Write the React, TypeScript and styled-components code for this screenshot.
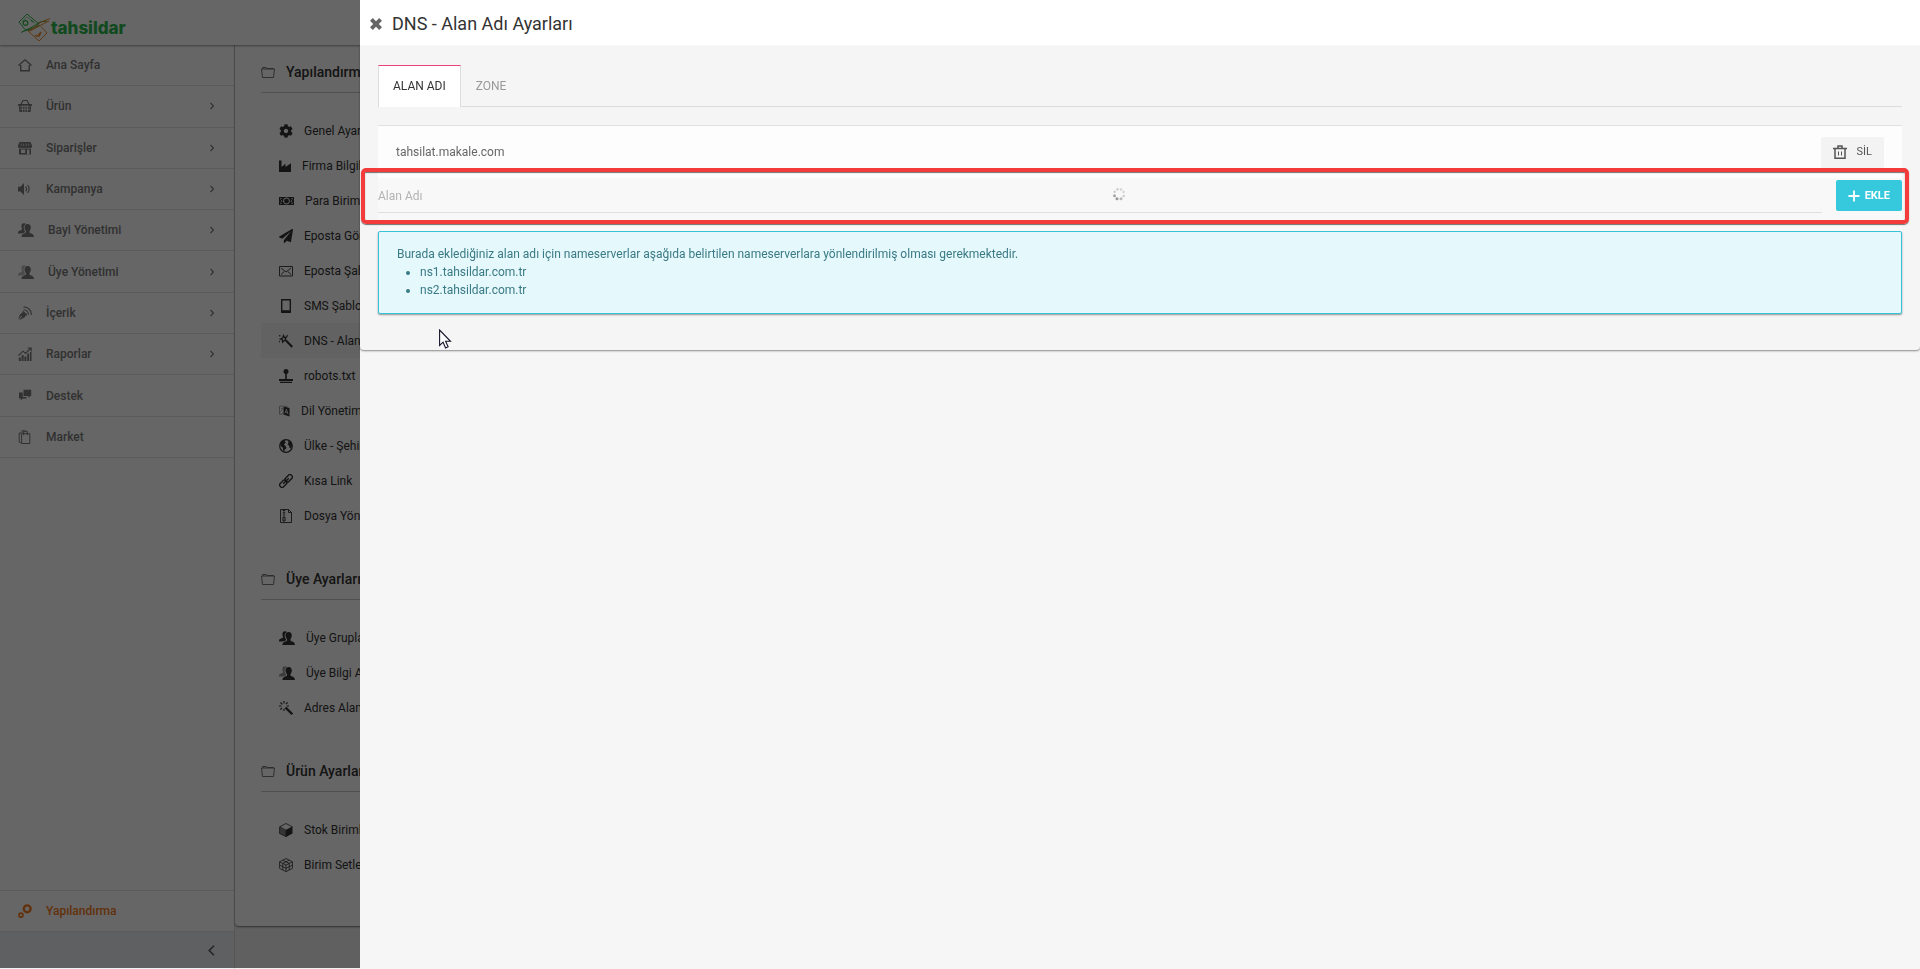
import React from "react";
import styled, { createGlobalStyle } from "styled-components";
import { FaCog, FaPaperPlane } from "react-icons/fa";

const GlobalStyle = createGlobalStyle`
  * { box-sizing: border-box; }
  body {
    margin: 0;
    background: #f0f0f0;
    color: #333;
    font-family: Roboto, "Liberation Sans", sans-serif;
    font-size: 12px;
    line-height: 18px;
  }
  ul { margin: 0; padding: 0; list-style: none; }
  a { color: inherit; text-decoration: none; }
  button, input { font: inherit; }
`;

/* ---------- shell ---------- */

const Shell = styled.div`
  display: flex;
  flex-direction: column;
  height: 100vh;
  min-height: 960px;
  overflow: hidden;
`;

const TopBar = styled.header`
  position: relative;
  z-index: 1;
  flex: none;
  display: flex;
  align-items: center;
  height: 45px;
  padding: 10px 18px 0;
  background: #fff;
  box-shadow: 0 1px 2px rgba(0, 0, 0, 0.4);
`;

const Brand = styled.a`
  display: flex;
  align-items: center;
  gap: 1px;
  color: #2fb84f;
  font-family: Inter, sans-serif;
  font-size: 17px;
  font-weight: 800;
`;

const Body = styled.div`
  flex: 1;
  display: flex;
  min-height: 0;
`;

/* ---------- sidebar ---------- */

const Sidebar = styled.nav`
  flex: none;
  display: flex;
  flex-direction: column;
  width: 235px;
  background: #fff;
  border-right: 1px solid #d8d8d8;
`;

const NavList = styled.ul`
  display: grid;
  grid-auto-rows: 1fr;
  height: 413px;
`;

const NavItem = styled.li`
  display: flex;
  border-bottom: 1px solid #e4e4e4;
`;

const NavLink = styled.a<{ $active?: boolean }>`
  flex: 1;
  display: flex;
  align-items: center;
  gap: 14px;
  padding: 0 20px 0 18px;
  color: ${(p) => (p.$active ? "#f47b20" : "#7a7a7a")};
  font-weight: 500;

  > svg:last-child:not(:first-child) { margin-left: auto; }
`;

const SidebarFoot = styled.div`
  margin-top: auto;
`;

const FootItem = styled.div`
  display: flex;
  height: 42px;
  border-top: 1px solid #e4e4e4;
  border-bottom: 1px solid #e4e4e4;
`;

const Collapse = styled.button`
  display: flex;
  align-items: center;
  justify-content: flex-end;
  width: 100%;
  height: 37px;
  padding: 0 19px;
  border: 0;
  background: #eef1f4;
  color: #555;
`;

/* ---------- settings card ---------- */

const Main = styled.main`
  flex: 1;
  min-width: 0;
`;

const Card = styled.div`
  padding: 7px 26px 44px;
  background: #fff;
  border-radius: 0 0 4px 4px;
  box-shadow: 0 1px 2px rgba(0, 0, 0, 0.5);
`;

const Group = styled.section`
  & + & { margin-top: 26px; }
`;

const GroupTitle = styled.h2`
  display: flex;
  align-items: center;
  gap: 11px;
  height: 41px;
  margin: 0 0 20px;
  border-bottom: 1px solid #c8c8c8;
  color: #333;
  font-size: 14px;
  font-weight: 500;

  svg { opacity: 0.75; }
`;

const SettingLink = styled.a<{ $active?: boolean }>`
  display: flex;
  align-items: center;
  gap: 11px;
  height: 35px;
  padding: 0 18px;
  background: ${(p) => (p.$active ? "#f5f5f5" : "transparent")};
  color: #333;
`;

/* ---------- drawer ---------- */

const Backdrop = styled.div`
  position: fixed;
  inset: 0 0 1px;
  z-index: 5;
  background: rgba(0, 0, 0, 0.6);
`;

const Drawer = styled.aside`
  position: fixed;
  inset: 0 0 0 360px;
  z-index: 6;
  background: #f6f6f6;
`;

const DrawerHead = styled.header`
  display: flex;
  align-items: center;
  gap: 10px;
  height: 46px;
  padding: 1px 10px 0;
  background: #fff;
`;

const CloseButton = styled.button`
  display: flex;
  padding: 0;
  border: 0;
  background: none;
  color: #666;
`;

const DrawerTitle = styled.h1`
  margin: 0;
  color: #333;
  font-size: 18px;
  font-weight: 400;
  line-height: 24px;
`;

const Panel = styled.div`
  position: relative;
  padding: 19px 18px 36px;
  background: #f5f5f5;
  border-radius: 0 0 4px 4px;
  box-shadow: 0 1px 2px rgba(0, 0, 0, 0.45);
`;

const Tabs = styled.div`
  display: flex;
  box-shadow: inset 0 -1px #ddd;
`;

const Tab = styled.button<{ $active?: boolean }>`
  height: 42px;
  padding: 0 14px 2px;
  border: 1px solid transparent;
  border-bottom: 0;
  border-color: ${(p) => (p.$active ? "#ec407a #ddd" : "transparent")};
  background: ${(p) => (p.$active ? "#fff" : "none")};
  color: ${(p) => (p.$active ? "#333" : "#999")};
`;

const DomainRow = styled.div`
  display: flex;
  align-items: center;
  justify-content: space-between;
  height: 53px;
  margin-top: 18px;
  padding: 0 18px;
  border-top: 1px solid #e0e0e0;
  background: #fdfdfd;
  color: #666;
`;

const Button = styled.button<{ $primary?: boolean }>`
  display: flex;
  align-items: center;
  gap: ${(p) => (p.$primary ? 5 : 10)}px;
  height: 31px;
  padding: 0 12px;
  border: 0;
  border-radius: 2px;
  background: ${(p) => (p.$primary ? "#36c9de" : "#f3f3f3")};
  color: ${(p) => (p.$primary ? "#fff" : "#555")};
  font-size: 11px;
  font-weight: ${(p) => (p.$primary ? 700 : 400)};
`;

const AddForm = styled.form`
  position: relative;
  display: flex;
  gap: 14px;
  height: 53px;
  padding-top: 2px;
  background: #f8f8f8;
`;

const Field = styled.div`
  position: relative;
  flex: 1;
`;

const DomainInput = styled.input`
  display: block;
  width: 100%;
  height: 33px;
  padding: 0;
  border: 0;
  border-bottom: 1px solid #e0e0e0;
  outline: 0;
  background: none;
  color: #555;

  &::placeholder { color: #b3b3b3; opacity: 1; }
`;

const Loader = styled.span`
  position: absolute;
  top: 7px;
  left: calc(50% + 12px);
  display: flex;
`;

const Highlight = styled.div`
  position: absolute;
  inset: -10px -7px 7px -17px;
  border: 4px solid #f43b3b;
  border-radius: 5px;
  box-shadow: 0 1px 1px rgba(0, 0, 0, 0.55), inset 0 1px 1px rgba(0, 0, 0, 0.55);
  pointer-events: none;
`;

const Notice = styled.div`
  padding: 13px 18px 14px;
  border: 1px solid #36c3d6;
  border-radius: 2px;
  background: #e5f8fc;
  box-shadow: 0 1px 2px rgba(0, 0, 0, 0.4);
  color: #3a7a85;

  p { margin: 0; }
  ul { padding-left: 23px; list-style: disc; }
`;

const Pointer = styled.span`
  position: absolute;
  top: 283px;
  left: 79px;
  display: flex;
`;

/* ---------- icons ---------- */

type IconProps = { w?: number; h?: number; children: React.ReactNode };

const Solid = ({ w = 14, h = 14, children }: IconProps) => (
  <svg width={w} height={h} viewBox={`0 0 ${w} ${h}`} fill="currentColor" aria-hidden="true">
    {children}
  </svg>
);

const Line = ({ w = 14, h = 14, children }: IconProps) => (
  <svg width={w} height={h} viewBox={`0 0 ${w} ${h}`} fill="none" stroke="currentColor" aria-hidden="true">
    {children}
  </svg>
);

const ChevronRight = () => (
  <Line w={4} h={8}><path d="M.5.9 3.4 4 .5 7.1" strokeWidth="1.2" /></Line>
);

const Home = () => (
  <Line><path d="M.4 7.500 7 1.800l6.600 5.700M2.700 7v5.700h8.600V7" strokeWidth="1.400" /></Line>
);

const Basket = () => (
  <Solid>
    <path d="M0 5h14v1.500h-.7L12.500 13h-11L.7 6.500H0z" />
    <path d="M3 5.200 5 1.500h4l2 3.700" fill="none" stroke="currentColor" strokeWidth="1.200" />
    <path d="M1.500 7.700h11M2 10.200h10M4.600 6v7M7 6v7M9.400 6v7" stroke="#fff" strokeWidth=".8" />
  </Solid>
);

const Store = () => (
  <Solid>
    <path d="M1.500 1h11L14 4.500V6a1.300 1.300 0 0 1-1 .9V13.500H1V6.900A1.300 1.300 0 0 1 0 6V4.500z" />
    <path d="M3 8.500h4.200V12H3zM9 8.500h2.400v5H9z" fill="#fff" />
    <path d="M3.200 2.500v2.500M5.700 2.500v2.500M8.300 2.500v2.500M10.800 2.500v2.500M1 7.300h12" stroke="#fff" strokeWidth=".7" />
  </Solid>
);

const Speaker = () => (
  <Solid>
    <path d="M0 4.700h2.500L6 1v12L2.500 9.500H0z" />
    <path d="M7.700 4.700q1.800 2.300 0 4.600M9.500 3q3.400 4 0 8" fill="none" stroke="currentColor" strokeWidth="1.100" />
  </Solid>
);

const People = ({ faded }: { faded?: boolean }) => (
  <Solid w={16}>
    <path
      d="M3.400 3.200C3.400 1.200 4.400.2 5.700.2c1 0 1.800.3 2.200 1C6.400 1.700 5.700 3 5.700 4.600c0 1.500.5 2.700 1.300 3.800v.8C6.300 9.800 5 10 3.900 10.500H0c0-2.700 1.500-2.900 3.200-3.500.9-.3 1-.8.7-1.500-.4-.8-.5-1.500-.5-2.300z"
      opacity={faded ? 0.5 : 1}
    />
    <path d="M6.500 4.500C6.500 2.300 7.700 1 9.700 1s3.100 1.300 3.100 3.500c0 1.600-.7 2.700-1.300 3.600v1.400c.9 1.200 4.300.8 4.500 4.500H3.400c.2-3.700 3.700-3.300 4.600-4.500V8.100C7.300 7.200 6.500 6.100 6.500 4.500z" />
  </Solid>
);

const PenSignal = () => (
  <Solid>
    <path d="M.3 13.500C1.500 9.500 2 7.500 5.500 6l2.700 2.700C7 12 4.500 12.500 1 13.900l3.200-3.600-.7-.6z" />
    <path d="M5.500 3.800q4.600.2 5 5M5.500.9q7.500.4 8 8" fill="none" stroke="currentColor" strokeWidth="1.100" />
    <path d="M4.800 5.300 9 9.300" stroke="currentColor" strokeWidth="1.200" />
  </Solid>
);

const Chart = () => (
  <Solid>
    <path d="M.8 10.500h2V14h-2zM3.600 8h2v6h-2zM6.400 9.500h2V14h-2zM9.200 6.500h2V14h-2zM12 5h1.500v9H12z" />
    <path d="M.5 8.500 5 4.200l2.500 2.300 5-5M9.700 1h3.500v3.500" fill="none" stroke="currentColor" strokeWidth="1.100" />
  </Solid>
);

const Chats = () => (
  <Solid>
    <path d="M5.500.8h7.700V7h-1.700L12 8.800 9.500 7h-4z" />
    <path d="M1 3.500h3.700V8H8.500v1.500H4.800L2.900 11.500V9.500H1z" />
  </Solid>
);

const Bags = () => (
  <Line>
    <path d="M3.600 3.700h8.200v9.800H3.600zM3.300 3H1.200v9l2 1M5.700 5.200V1.300h3.600v3.900M4 3.300V.8h3" />
  </Line>
);

const Gears = () => (
  <Line><circle cx="9.200" cy="4.800" r="3.400" strokeWidth="2.400" /><circle cx="3" cy="11.200" r="2" strokeWidth="1.700" /></Line>
);

const Folder = () => (
  <Line><path d="M.5 4h13l-1 8.500h-11zM1.700 4V2.500h3.500l.8 1h6.300V4" strokeWidth=".9" /></Line>
);

const Factory = () => (
  <Solid w={12}><path d="M0 1.500h2.500V8L6.500 4.700V8L12 4.200V13H0z" /></Solid>
);

const Banknote = () => (
  <Solid w={15}>
    <path d="M0 3h15v8H0z" />
    <circle cx="7.500" cy="7" r="3" fill="none" stroke="#fff" />
    <path d="M1.500 5.500V4.500h1.200M12.300 4.500h1.200v1M1.500 8.500v1h1.200M12.300 9.500h1.200v-1M2.500 6v2M12.500 6v2" fill="none" stroke="#fff" strokeWidth=".7" />
  </Solid>
);

const Envelope = () => (
  <Line><path d="M.5 2.500h13v9.500H.5zM2 4l5 4 5-4M2 10.500l3.200-3M12 10.500l-3.200-3" strokeWidth=".9" /></Line>
);

const Tablet = () => (
  <Solid>
    <path d="M2 1a.9.9 0 0 1 1-1h8a.9.9 0 0 1 1 1v12a.9.9 0 0 1-1 1H3a.9.9 0 0 1-1-1zM3.400 1.600v9.600h7.200V1.600z" fillRule="evenodd" />
  </Solid>
);

const StarWand = () => (
  <Line>
    <path d="m7.500 7 5.800 6" strokeWidth="2.200" />
    <path d="m4.500 1.500.7 2 2.300-.6-1.300 2 1.200 2-2.200-.4-1.600 1.600-.2-2.300L1.300 5l2.200-.9zM0 1.500l1.500.5M0 8l1-.7M8.500 1.200 7.800 2" strokeWidth="1.200" />
  </Line>
);

const Joystick = () => (
  <Solid>
    <circle cx="7" cy="2.500" r="2.500" />
    <path d="M6.200 4h1.600v6H14v2H0v-2h6.200zM1 12.700h12V14H1z" />
  </Solid>
);

const Translate = () => (
  <Solid w={11} h={12}>
    <path d="M4.500 1.500 10.500 3v8.500L4.500 9.500z" />
    <path d="M4.500 1.200H.5v8l4-.5M2 3.500h2M1.500 6.500l2-2M5.500 1l3 .7" fill="none" stroke="currentColor" strokeWidth=".7" opacity=".6" />
    <path d="m6 8.200 1.500-4 1.500 5M6.500 7l2 .6" fill="none" stroke="#fff" strokeWidth=".8" />
  </Solid>
);

const Globe = () => (
  <Solid>
    <circle cx="7" cy="7" r="6.300" fill="none" stroke="currentColor" strokeWidth="1.200" />
    <path d="M1.500 4.500C2.500 2.500 4 1 6.500 1l-.7 1.700 1 .8-1.800 2L6.800 7.500 7.500 9l-2 2v2C4 12 4 10 3.700 8.500L1.500 7zM9 1.300l3 2 1.200 3.200L12 9.500l-1.500-.8-.3-2L8.500 5.500 9.500 3.500z" />
  </Solid>
);

const Chain = () => (
  <Line>
    <g transform="rotate(-45 7 7)" strokeWidth="1.400">
      <rect x="-.8" y="4.700" width="7.500" height="4.600" rx="1" />
      <rect x="7.300" y="4.700" width="7.500" height="4.600" rx="1" />
      <path d="M3 7h8" />
    </g>
  </Line>
);

const Archive = () => (
  <Line>
    <path d="M1.500.5h8l3 3v10h-11zM9.500.5v3h3" strokeWidth=".9" />
    <path d="M5 1v6" strokeWidth="2.400" strokeDasharray="1 .8" />
    <path d="M4 8h2v4H4z" />
  </Line>
);

const MagicWand = () => (
  <Line>
    <path d="m6.500 6.500 6.800 6.700" strokeWidth="2.400" />
    <path d="M5 0v2.500M0 5h2.500M1.500 1.500l1.800 1.800M8.700 1.300 7 3M1.300 8.700 3 7M7.700 5H10M5 7.700V10" strokeWidth="1.200" />
  </Line>
);

const BoxIcon = () => (
  <Solid>
    <path d="M7 7.300 13.500 3.800v6.700L7 14z" />
    <path d="M7 .5 13.300 3.800 7 7.200.7 3.800zM.6 3.900V10.500L7 13.700V7.200" fill="none" stroke="currentColor" strokeWidth=".8" />
    <path d="M.6 4.200 7 7.500v6L.6 10.500z" opacity=".6" />
  </Solid>
);

const Lattice = () => (
  <Line>
    <path d="M7 .5 13.400 3.800v6.600L7 13.600.6 10.400V3.800zM.6 3.800 7 7l6.400-3.200M7 7v6.600M3.800 2.200l6.400 3.200v6.600M10.200 2.200 3.800 5.400V12M.6 7.100 7 10.300l6.400-3.200" strokeWidth=".8" />
  </Line>
);

const Close = () => (
  <Solid w={12} h={12}>
    <path d="M2.800 0 6 3.200 9.200 0 12 2.800 8.800 6 12 9.200 9.200 12 6 8.800 2.800 12 0 9.200 3.200 6 0 2.800z" />
  </Solid>
);

const Trash = () => (
  <Line>
    <path d="M0 3.500h14M2 3.500v9.700h10V3.500M5 3.200V1h4v2.200" strokeWidth="1.500" />
    <path d="M5.500 6.500v4M8.500 6.500v4" />
  </Line>
);

const Plus = () => (
  <Line w={12} h={12}><path d="M6 .5v11M.5 6h11" strokeWidth="1.800" /></Line>
);

const Spinner = () => (
  <Solid>
    {[
      [11.5, 5, 0.3], [9, 2.5, 0.3], [5.5, 2.3, 0.35], [2.7, 4.7, 0.35],
      [2.5, 8.7, 0.65], [5, 11.7, 0.75], [9, 11.7, 0.5], [11.7, 9, 0.35],
    ].map(([x, y, o]) => (
      <circle key={`${x}-${y}`} cx={x} cy={y} r={o > 0.4 ? 1.5 : 1.2} fill="#777" opacity={o} />
    ))}
  </Solid>
);

const Logo = () => (
  <svg width="32" height="29" viewBox="0 0 32 29" fill="none" aria-hidden="true">
    <path d="M1 9 9 1l12 10-9 6.500-5-1z" stroke="#2fb84f" />
    <path d="M3.500 9 9 3.800l8 6.500" stroke="#2fb84f" strokeWidth=".6" />
    <circle cx="7.500" cy="10" r="2.300" stroke="#2fb84f" strokeWidth="1.300" />
    <path d="m13 7.500 2 1.500" stroke="#2fb84f" strokeWidth="1.300" />
    <path d="M3 19.500 14 14l8-5 7-1M5 18.500l17-6" stroke="#2fb84f" />
    <path d="M32 5.500 23 9l-6 5-7 4 11 10 8-8-6-6.500M31 8l-8 4-11 6" stroke="#f08a30" />
    <path d="m17 22 2 1.500 4-4.500-2 5" stroke="#f08a30" strokeWidth="1.200" />
  </svg>
);

const Cursor = () => (
  <svg width="13" height="20" viewBox="0 0 13 20" aria-hidden="true">
    <path d="M.6 1v15.500l3.500-3.300 2.500 5.700 2.500-1.100-2.500-5.500H11.500z" fill="#fff" stroke="#15152a" strokeWidth="1.100" />
  </svg>
);

/* ---------- data ---------- */

const navItems = [
  { label: "Ana Sayfa", icon: <Home /> },
  { label: "Ürün", icon: <Basket />, more: true },
  { label: "Siparişler", icon: <Store />, more: true },
  { label: "Kampanya", icon: <Speaker />, more: true },
  { label: "Bayi Yönetimi", icon: <People />, more: true },
  { label: "Üye Yönetimi", icon: <People faded />, more: true },
  { label: "İçerik", icon: <PenSignal />, more: true },
  { label: "Raporlar", icon: <Chart />, more: true },
  { label: "Destek", icon: <Chats /> },
  { label: "Market", icon: <Bags /> },
];

const groups = [
  {
    title: "Yapılandırma",
    items: [
      { label: "Genel Ayarlar", icon: <FaCog size={14} /> },
      { label: "Firma Bilgileri", icon: <Factory /> },
      { label: "Para Birimleri", icon: <Banknote /> },
      { label: "Eposta Gönderimi", icon: <FaPaperPlane size={14} /> },
      { label: "Eposta Şablonları", icon: <Envelope /> },
      { label: "SMS Şablonları", icon: <Tablet /> },
      { label: "DNS - Alan Adı Ayarları", icon: <StarWand />, active: true },
      { label: "robots.txt", icon: <Joystick /> },
      { label: "Dil Yönetimi", icon: <Translate /> },
      { label: "Ülke - Şehir", icon: <Globe /> },
      { label: "Kısa Link", icon: <Chain /> },
      { label: "Dosya Yönetimi", icon: <Archive /> },
    ],
  },
  {
    title: "Üye Ayarları",
    items: [
      { label: "Üye Grupları", icon: <People /> },
      { label: "Üye Bilgi Alanları", icon: <People faded /> },
      { label: "Adres Alanları", icon: <MagicWand /> },
    ],
  },
  {
    title: "Ürün Ayarları",
    items: [
      { label: "Stok Birimleri", icon: <BoxIcon /> },
      { label: "Birim Setleri", icon: <Lattice /> },
    ],
  },
];

export default function App() {
  return (
    <>
      <GlobalStyle />
      <Shell>
        <TopBar>
          <Brand href="#"><Logo />tahsildar</Brand>
        </TopBar>
        <Body>
          <Sidebar>
            <NavList>
              {navItems.map((item) => (
                <NavItem key={item.label}>
                  <NavLink href="#">
                    {item.icon}
                    {item.label}
                    {item.more && <ChevronRight />}
                  </NavLink>
                </NavItem>
              ))}
            </NavList>
            <SidebarFoot>
              <FootItem>
                <NavLink href="#" $active><Gears />Yapılandırma</NavLink>
              </FootItem>
              <Collapse type="button" aria-label="Menüyü daralt">
                <Line w={7} h={11}><path d="M6 .8 1.200 5.500 6 10.200" strokeWidth="1.500" /></Line>
              </Collapse>
            </SidebarFoot>
          </Sidebar>
          <Main>
            <Card>
              {groups.map((group) => (
                <Group key={group.title}>
                  <GroupTitle><Folder />{group.title}</GroupTitle>
                  <ul>
                    {group.items.map((item) => (
                      <li key={item.label}>
                        <SettingLink href="#" $active={"active" in item}>
                          {item.icon}
                          {item.label}
                        </SettingLink>
                      </li>
                    ))}
                  </ul>
                </Group>
              ))}
            </Card>
          </Main>
        </Body>
      </Shell>
      <Backdrop />
      <Drawer>
        <DrawerHead>
          <CloseButton type="button" aria-label="Kapat"><Close /></CloseButton>
          <DrawerTitle>DNS - Alan Adı Ayarları</DrawerTitle>
        </DrawerHead>
        <Panel>
          <Tabs role="tablist">
            <Tab type="button" role="tab" aria-selected="true" $active>ALAN ADI</Tab>
            <Tab type="button" role="tab" aria-selected="false">ZONE</Tab>
          </Tabs>
          <DomainRow>
            <span>tahsilat.makale.com</span>
            <Button type="button"><Trash />SİL</Button>
          </DomainRow>
          <AddForm onSubmit={(e) => e.preventDefault()}>
            <Field>
              <DomainInput type="text" placeholder="Alan Adı" aria-label="Alan Adı" />
              <Loader><Spinner /></Loader>
            </Field>
            <Button type="submit" $primary><Plus />EKLE</Button>
            <Highlight />
          </AddForm>
          <Notice>
            <p>Burada eklediğiniz alan adı için nameserverlar aşağıda belirtilen nameserverlara yönlendirilmiş olması gerekmektedir.</p>
            <ul>
              <li>ns1.tahsildar.com.tr</li>
              <li>ns2.tahsildar.com.tr</li>
            </ul>
          </Notice>
          <Pointer><Cursor /></Pointer>
        </Panel>
      </Drawer>
    </>
  );
}
